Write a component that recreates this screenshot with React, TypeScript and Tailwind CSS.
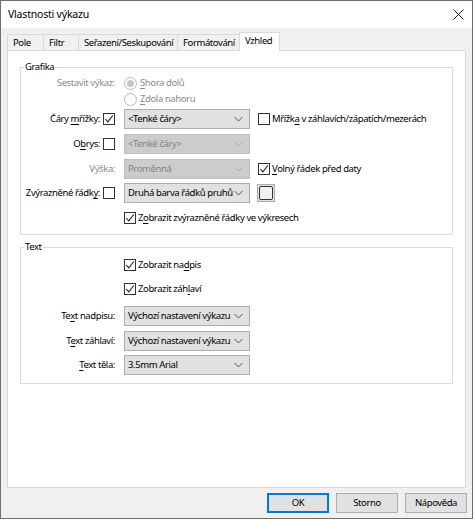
import React from "react";

type CheckProps = { checked?: boolean };

const Check: React.FC<CheckProps> = ({ checked }) => (
  <span className="w-[12px] h-[12px] shrink-0 border border-[#333333] bg-white flex items-center justify-center">
    {checked && (
      <svg width="10" height="10" viewBox="0 0 10 10">
        <path d="M1.2 5 L3.8 7.8 L8.8 1.5" stroke="#222222" strokeWidth="1.1" fill="none" />
      </svg>
    )}
  </span>
);

const Radio: React.FC<{ checked?: boolean }> = ({ checked }) => (
  <span className="w-[13px] h-[13px] shrink-0 rounded-full border border-[#bcbcbc] bg-[#fcfcfc] flex items-center justify-center">
    {checked && <span className="w-[7px] h-[7px] rounded-full bg-[#c6c6c6]" />}
  </span>
);

interface ComboProps {
  value: string;
  disabled?: boolean;
}

const Combo: React.FC<ComboProps> = ({ value, disabled }) => (
  <div
    className={
      "h-[20px] w-[126px] shrink-0 border flex items-center justify-between pl-[3px] pr-[6px] " +
      (disabled
        ? "bg-[#cccccc] border-[#bfbfbf] text-[#838383]"
        : "bg-[#e1e1e1] border-[#adadad] text-black")
    }
  >
    <span className="whitespace-nowrap">{value}</span>
    <svg width="9" height="6" viewBox="0 0 9 6">
      <path
        d="M0.5 1 L4.5 5 L8.5 1"
        stroke={disabled ? "#a6a6a6" : "#555555"}
        fill="none"
        strokeWidth="1"
      />
    </svg>
  </div>
);

const Label: React.FC<{ children: React.ReactNode; disabled?: boolean }> = ({ children, disabled }) => (
  <div className={"w-[94px] shrink-0 flex items-center justify-end gap-[3px] whitespace-nowrap " + (disabled ? "text-[#8a8a8a]" : "")}>
    {children}
  </div>
);

const U: React.FC<{ children: React.ReactNode }> = ({ children }) => (
  <span className="underline underline-offset-2 decoration-1">{children}</span>
);

const tabs = [
  { name: "Pole", w: "w-[37px]" },
  { name: "Filtr", w: "w-[36px]" },
  { name: "Seřazení/Seskupování", w: "w-[100px]" },
  { name: "Formátování", w: "w-[63px]" },
];

export default function App() {
  return (
    <div className="w-[474px] h-[519px] bg-white font-['Noto_Sans',sans-serif] text-[9.5px] tracking-[-0.4px] leading-none text-black">
      <div className="w-[473px] h-[519px] border border-[#6e6e6e] bg-[#f0f0f0] flex flex-col">
        {/* title bar */}
        <div className="h-[27px] bg-white flex items-center justify-between pl-[7px] pr-[8px]">
          <span className="text-[10.5px] tracking-[-0.2px]">Vlastnosti výkazu</span>
          <svg width="11" height="11" viewBox="0 0 11 11">
            <path d="M0.5 0.5 L10.5 10.5 M10.5 0.5 L0.5 10.5" stroke="#222222" strokeWidth="1" />
          </svg>
        </div>

        {/* tabs */}
        <div className="mt-[5px] pl-[6px] flex items-end h-[17px] relative z-10">
          {tabs.map((t) => (
            <div
              key={t.name}
              className={t.w + " h-[16px] border border-b-0 border-[#d9d9d9] -ml-px first:ml-0 bg-[#f0f0f0] flex items-center pl-[5px] whitespace-nowrap"}
            >
              {t.name}
            </div>
          ))}
          <div className="w-[41px] h-[19px] border border-b-0 border-[#d9d9d9] bg-white -ml-px -mb-px flex items-center pl-[5px] pb-[2px]">
            Vzhled
          </div>
        </div>

        {/* panel */}
        <div className="ml-[6px] w-[459px] h-[438px] border border-[#d9d9d9] bg-white pt-[16px] px-[12px]">
          {/* Grafika */}
          <div className="relative border border-[#dcdcdc] pt-[7px] pb-[8px]">
            <span className="absolute -top-[6px] left-[3px] bg-white px-[1px]">Grafika</span>

            <div className="flex items-center h-[16px] gap-[9px]">
              <Label disabled>Sestavit výkaz:</Label>
              <div className="flex items-center gap-[3px] text-[#8a8a8a]">
                <Radio checked />
                <span><U>S</U>hora dolů</span>
              </div>
            </div>
            <div className="flex items-center h-[16px] gap-[9px]">
              <Label>{""}</Label>
              <div className="flex items-center gap-[3px] text-[#8a8a8a]">
                <Radio />
                <span><U>Z</U>dola nahoru</span>
              </div>
            </div>

            <div className="mt-[2px] flex items-center h-[20px] gap-[9px]">
              <Label>
                <span>Čáry <U>m</U>řížky:</span>
                <Check checked />
              </Label>
              <Combo value="<Tenké čáry>" />
              <div className="flex items-center gap-[2px] whitespace-nowrap -ml-[1px]">
                <Check />
                <span>Mřížk<U>a</U> v záhlavích/zápatích/mezerách</span>
              </div>
            </div>

            <div className="mt-[5px] flex items-center h-[20px] gap-[9px]">
              <Label>
                <span>O<U>b</U>rys:</span>
                <Check />
              </Label>
              <Combo value="<Tenké čáry>" disabled />
            </div>

            <div className="mt-[5px] flex items-center h-[20px] gap-[9px]">
              <Label disabled>Výška:</Label>
              <Combo value="Proměnná" disabled />
              <div className="flex items-center gap-[2px] whitespace-nowrap -ml-[1px]">
                <Check checked />
                <span><U>V</U>olný řádek před daty</span>
              </div>
            </div>

            <div className="mt-[4px] flex items-center h-[20px] gap-[9px]">
              <Label>
                <span>Zvýrazněné řádk<U>y</U>:</span>
                <Check />
              </Label>
              <Combo value="Druhá barva řádků pruhů" />
              <div className="-ml-[2px] w-[18px] h-[18px] border border-[#adadad] bg-[#e1e1e1] flex items-center justify-center">
                <span className="w-[14px] h-[14px] border border-[#333333] rounded-[2px] bg-[#f0f0f0]" />
              </div>
            </div>

            <div className="mt-[7px] flex items-center h-[16px] gap-[9px]">
              <Label>{""}</Label>
              <div className="flex items-center gap-[2px] whitespace-nowrap">
                <Check checked />
                <span>Z<U>o</U>brazit zvýrazněné řádky ve výkresech</span>
              </div>
            </div>
          </div>

          {/* Text */}
          <div className="relative mt-[12px] border border-[#dcdcdc] pt-[9px] pb-[8px]">
            <span className="absolute -top-[6px] left-[3px] bg-white px-[1px]">Text</span>

            <div className="flex items-center h-[16px] gap-[9px]">
              <Label>{""}</Label>
              <div className="flex items-center gap-[2px] whitespace-nowrap">
                <Check checked />
                <span>Zobrazit na<U>d</U>pis</span>
              </div>
            </div>

            <div className="mt-[8px] flex items-center h-[16px] gap-[9px]">
              <Label>{""}</Label>
              <div className="flex items-center gap-[2px] whitespace-nowrap">
                <Check checked />
                <span>Zobrazit záh<U>l</U>aví</span>
              </div>
            </div>

            <div className="mt-[9px] flex items-center h-[20px] gap-[9px]">
              <Label>
                <span>Te<U>x</U>t nadpisu:</span>
              </Label>
              <Combo value="Výchozí nastavení výkazu" />
            </div>

            <div className="mt-[5px] flex items-center h-[20px] gap-[9px]">
              <Label>
                <span>T<U>e</U>xt záhlaví:</span>
              </Label>
              <Combo value="Výchozí nastavení výkazu" />
            </div>

            <div className="mt-[4px] flex items-center h-[20px] gap-[9px]">
              <Label>
                <span><U>T</U>ext těla:</span>
              </Label>
              <Combo value="3.5mm Arial" />
            </div>
          </div>
        </div>

        {/* buttons */}
        <div className="mt-[5px] flex justify-end gap-[7px] pr-[5px]">
          <button className="w-[62px] h-[20px] border-2 border-[#0078d7] bg-[#e1e1e1] flex items-center justify-center">
            OK
          </button>
          <button className="w-[62px] h-[20px] border border-[#adadad] bg-[#e1e1e1] flex items-center justify-center">
            Storno
          </button>
          <button className="w-[62px] h-[20px] border border-[#adadad] bg-[#e1e1e1] flex items-center justify-center">
            Nápověda
          </button>
        </div>
      </div>
    </div>
  );
}
